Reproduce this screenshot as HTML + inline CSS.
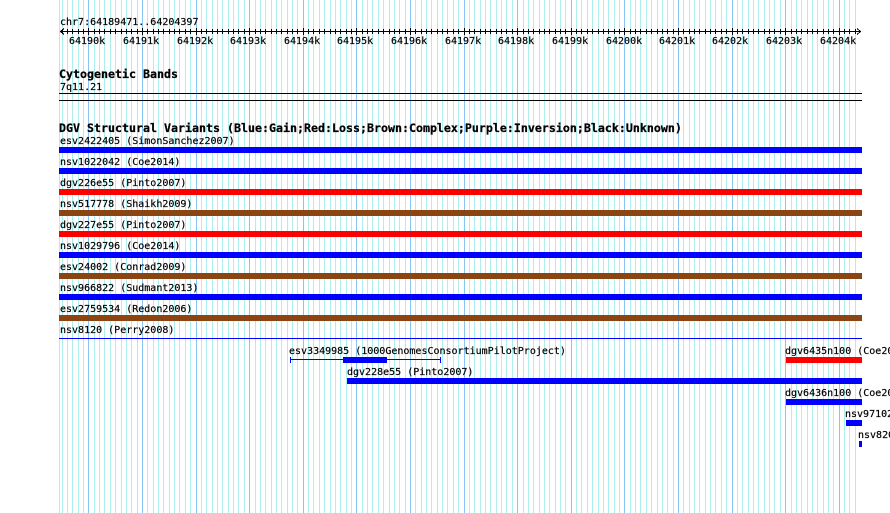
<!DOCTYPE html>
<html>
<head>
<meta charset="utf-8">
<title>DGV Structural Variants</title>
<style>
html,body{margin:0;padding:0;background:#fff;width:890px;height:513px;overflow:hidden}
svg{display:block}
text{font-family:"DejaVu Sans Mono","Liberation Mono",monospace;font-size:10px;fill:#000;stroke:#000;stroke-width:.18px;white-space:pre}
text.b{font-weight:bold;font-size:11.63px;stroke-width:.25px}
</style>
</head>
<body>
<svg width="890" height="513" viewBox="0 0 890 513" xmlns="http://www.w3.org/2000/svg" shape-rendering="crispEdges">
<defs>
<path id="minor" transform="translate(.5 0)" d="M59 0V513M62 0V513M67 0V513M72 0V513M78 0V513M83 0V513M94 0V513M99 0V513M104 0V513M110 0V513M115 0V513M121 0V513M126 0V513M131 0V513M137 0V513M147 0V513M153 0V513M158 0V513M163 0V513M169 0V513M174 0V513M179 0V513M185 0V513M190 0V513M201 0V513M206 0V513M212 0V513M217 0V513M222 0V513M228 0V513M233 0V513M238 0V513M244 0V513M255 0V513M260 0V513M265 0V513M271 0V513M276 0V513M281 0V513M287 0V513M292 0V513M297 0V513M308 0V513M313 0V513M319 0V513M324 0V513M330 0V513M335 0V513M340 0V513M346 0V513M351 0V513M362 0V513M367 0V513M372 0V513M378 0V513M383 0V513M389 0V513M394 0V513M399 0V513M405 0V513M415 0V513M421 0V513M426 0V513M431 0V513M437 0V513M442 0V513M447 0V513M453 0V513M458 0V513M469 0V513M474 0V513M480 0V513M485 0V513M490 0V513M496 0V513M501 0V513M506 0V513M512 0V513M523 0V513M528 0V513M533 0V513M539 0V513M544 0V513M549 0V513M555 0V513M560 0V513M565 0V513M576 0V513M581 0V513M587 0V513M592 0V513M598 0V513M603 0V513M608 0V513M614 0V513M619 0V513M630 0V513M635 0V513M640 0V513M646 0V513M651 0V513M657 0V513M662 0V513M667 0V513M673 0V513M683 0V513M689 0V513M694 0V513M699 0V513M705 0V513M710 0V513M715 0V513M721 0V513M726 0V513M737 0V513M742 0V513M748 0V513M753 0V513M758 0V513M764 0V513M769 0V513M774 0V513M780 0V513M791 0V513M796 0V513M801 0V513M807 0V513M812 0V513M817 0V513M823 0V513M828 0V513M833 0V513M844 0V513M849 0V513M855 0V513"/>
<path id="major" transform="translate(.5 0)" d="M88 0V513M142 0V513M196 0V513M249 0V513M303 0V513M356 0V513M410 0V513M464 0V513M517 0V513M571 0V513M624 0V513M678 0V513M732 0V513M785 0V513M839 0V513"/>
<clipPath id="tk"><rect x="62" y="29" width="796" height="5"/></clipPath>
<clipPath id="tk2"><rect x="62" y="28" width="796" height="7"/></clipPath>
</defs>

<use href="#minor" fill="none" stroke="#afeeee"/>
<use href="#major" fill="none" stroke="#87c5f5"/>

<!-- ruler -->
<text x="60" y="25">chr7:64189471..64204397</text>
<path d="M60 31.5H860" stroke="#000" fill="none"/>
<path d="M64 28.500L60.500 31.500L64 34.500M857 28.500L860.500 31.500L857 34.500" stroke="#000" fill="none"/>
<g clip-path="url(#tk)"><use href="#minor" fill="none" stroke="#000"/></g>
<g clip-path="url(#tk2)"><use href="#major" fill="none" stroke="#000"/></g>
<text x="69" y="44">64190k</text>
<text x="123" y="44">64191k</text>
<text x="177" y="44">64192k</text>
<text x="230" y="44">64193k</text>
<text x="284" y="44">64194k</text>
<text x="337" y="44">64195k</text>
<text x="391" y="44">64196k</text>
<text x="445" y="44">64197k</text>
<text x="498" y="44">64198k</text>
<text x="552" y="44">64199k</text>
<text x="606" y="44">64200k</text>
<text x="659" y="44">64201k</text>
<text x="712" y="44">64202k</text>
<text x="766" y="44">64203k</text>
<text x="820" y="44">64204k</text>

<!-- cytogenetic -->
<text class="b" x="59" y="78">Cytogenetic Bands</text>
<text x="60" y="90">7q11.21</text>
<rect x="59" y="93" width="803" height="1" fill="#000"/>
<rect x="59" y="100" width="803" height="1" fill="#000"/>

<!-- DGV -->
<text class="b" x="59" y="132">DGV Structural Variants (Blue:Gain;Red:Loss;Brown:Complex;Purple:Inversion;Black:Unknown)</text>

<text x="60" y="144">esv2422405 (SimonSanchez2007)</text>
<rect x="59" y="147" width="803" height="6" fill="#0000ff"/>
<text x="60" y="165">nsv1022042 (Coe2014)</text>
<rect x="59" y="168" width="803" height="6" fill="#0000ff"/>
<text x="60" y="186">dgv226e55 (Pinto2007)</text>
<rect x="59" y="189" width="803" height="6" fill="#ff0000"/>
<text x="60" y="207">nsv517778 (Shaikh2009)</text>
<rect x="59" y="210" width="803" height="6" fill="#8b4513"/>
<text x="60" y="228">dgv227e55 (Pinto2007)</text>
<rect x="59" y="231" width="803" height="6" fill="#ff0000"/>
<text x="60" y="249">nsv1029796 (Coe2014)</text>
<rect x="59" y="252" width="803" height="6" fill="#0000ff"/>
<text x="60" y="270">esv24002 (Conrad2009)</text>
<rect x="59" y="273" width="803" height="6" fill="#8b4513"/>
<text x="60" y="291">nsv966822 (Sudmant2013)</text>
<rect x="59" y="294" width="803" height="6" fill="#0000ff"/>
<text x="60" y="312">esv2759534 (Redon2006)</text>
<rect x="59" y="315" width="803" height="6" fill="#8b4513"/>
<text x="60" y="333">nsv8120 (Perry2008)</text>
<rect x="59" y="338" width="803" height="1" fill="#0000ff"/>

<!-- features -->
<text x="289" y="354">esv3349985 (1000GenomesConsortiumPilotProject)</text>
<rect x="290" y="359" width="151" height="1" fill="#0000ff"/>
<rect x="290" y="357" width="1" height="6" fill="#0000ff"/>
<rect x="440" y="357" width="1" height="6" fill="#0000ff"/>
<rect x="343" y="357" width="44" height="6" fill="#0000ff"/>

<text x="347" y="375">dgv228e55 (Pinto2007)</text>
<rect x="347" y="378" width="515" height="6" fill="#0000ff"/>

<text x="785" y="354">dgv6435n100 (Coe2014)</text>
<rect x="786" y="357" width="76" height="6" fill="#ff0000"/>

<text x="785" y="396">dgv6436n100 (Coe2014)</text>
<rect x="786" y="399" width="76" height="6" fill="#0000ff"/>

<text x="845" y="417">nsv971028</text>
<rect x="846" y="420" width="16" height="6" fill="#0000ff"/>

<text x="858" y="438">nsv8201</text>
<rect x="859" y="441" width="3" height="6" fill="#0000ff"/>
</svg>
</body>
</html>
